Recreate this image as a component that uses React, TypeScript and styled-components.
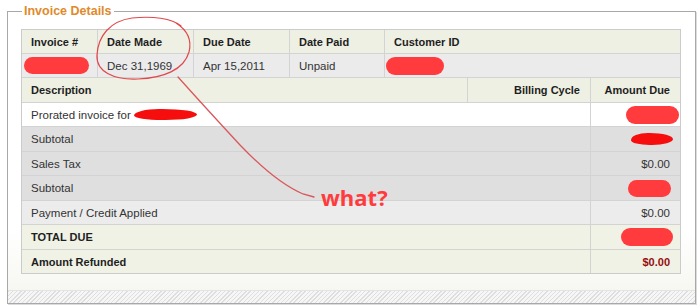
import React from "react";
import styled, { createGlobalStyle } from "styled-components";

const GlobalStyle = createGlobalStyle`
  html, body {
    margin: 0;
    padding: 0;
    background: #fff;
  }
  body {
    font-family: "Liberation Sans", Arial, sans-serif;
  }
`;

type Tone = "head" | "plain" | "white" | "gray" | "light" | "beige";

const toneColors: Record<Tone, string> = {
  head: "#eef0e3",
  plain: "#ebebeb",
  white: "#ffffff",
  gray: "#dfdfdf",
  light: "#ececec",
  beige: "#f0f2e6",
};

const Page = styled.div`
  position: relative;
  width: 700px;
  height: 308px;
  overflow: hidden;
`;

const Fieldset = styled.fieldset`
  margin: 4px 4px 0 7px;
  padding: 0;
  min-width: 0;
  border: 1px solid #a8a8a8;
  box-shadow: 1px 1px 0 #dcdcdc;
  background: linear-gradient(#ffffff 75%, #f5f5ef);
`;

const Legend = styled.legend`
  margin-left: 14px;
  padding: 0 2px;
  font-size: 12.5px;
  line-height: 15px;
  font-weight: 700;
  color: #df8a2c;
`;

const Content = styled.div`
  padding: 10px 14px 16px 13px;
`;

const Table = styled.div`
  border: 1px solid #cbcbcb;
`;

const Row = styled.div<{ $cols: string; $tone: Tone; $tall?: boolean; $last?: boolean }>`
  display: grid;
  grid-template-columns: ${(p) => p.$cols};
  height: ${(p) => (p.$tall ? 25 : 24)}px;
  box-sizing: border-box;
  border-bottom: ${(p) => (p.$last ? "none" : "1px solid #d3d3d3")};
  background: ${(p) => toneColors[p.$tone]};
  ${(p) => (p.$last ? "height: " + (p.$tall ? 24 : 23) + "px;" : "")}
`;

const Cell = styled.div<{ $bold?: boolean; $align?: "left" | "right"; $tight?: boolean; $red?: boolean }>`
  display: flex;
  align-items: center;
  justify-content: ${(p) => (p.$align === "right" ? "flex-end" : "flex-start")};
  box-sizing: border-box;
  padding: ${(p) => (p.$tight ? "0 1px" : "0 10px 0 9px")};
  border-right: 1px solid #d3d3d3;
  font-size: ${(p) => (p.$bold ? "11px" : "11.5px")};
  font-weight: ${(p) => (p.$bold ? 700 : 400)};
  color: ${(p) => (p.$red ? "#960d0d" : p.$bold ? "#1e1e1e" : "#333")};
  white-space: nowrap;
  overflow: hidden;

  &:last-child {
    border-right: none;
  }
`;

const Blob = styled.span<{ $w: number; $h: number; $brush?: boolean; $ml?: number; $mr?: number }>`
  display: inline-block;
  flex: none;
  width: ${(p) => p.$w}px;
  height: ${(p) => p.$h}px;
  margin-left: ${(p) => p.$ml ?? 0}px;
  margin-right: ${(p) => p.$mr ?? 0}px;
  border-radius: ${(p) => (p.$brush ? "40% 55% 50% 45% / 60% 50% 50% 40%" : `${p.$h / 2}px`)};
  background: ${(p) => (p.$brush ? "#f60d0d" : "#ff3b3e")};
`;

const Hatch = styled.div`
  height: 12px;
  border-top: 1px solid #e4e4e4;
  background: repeating-linear-gradient(135deg, #dedede 0 1px, #f6f6f6 1px 3px);
`;

const Scribble = styled.svg`
  position: absolute;
  left: 0;
  top: 0;
  pointer-events: none;
`;

const What = styled.span`
  position: absolute;
  left: 321px;
  top: 186px;
  font-family: "Open Sans", "Liberation Sans", sans-serif;
  font-size: 22px;
  line-height: 22px;
  font-weight: 700;
  color: #ff3b3e;
`;

const TOP_COLS = "76px 96px 96px 95px 1fr";
const DESC_COLS = "446px 123px 1fr";
const BODY_COLS = "569px 1fr";

const lines: {
  label: React.ReactNode;
  tone: Tone;
  tall?: boolean;
  bold?: boolean;
  amount: React.ReactNode;
  red?: boolean;
}[] = [
  {
    label: (
      <>
        Prorated invoice for&nbsp;
        <Blob $w={63} $h={11} $brush />
      </>
    ),
    tone: "white",
    amount: <Blob $w={53} $h={18} />,
  },
  { label: "Subtotal", tone: "gray", tall: true, amount: <Blob $w={42} $h={12} $brush $mr={6} /> },
  { label: "Sales Tax", tone: "gray", amount: "$0.00" },
  { label: "Subtotal", tone: "gray", tall: true, amount: <Blob $w={43} $h={17} $mr={8} /> },
  { label: "Payment / Credit Applied", tone: "light", amount: "$0.00" },
  { label: "TOTAL DUE", tone: "beige", tall: true, bold: true, amount: <Blob $w={52} $h={18} $mr={6} /> },
  { label: "Amount Refunded", tone: "beige", bold: true, amount: "$0.00", red: true },
];

export default function App() {
  return (
    <Page>
      <GlobalStyle />
      <Fieldset>
        <Legend>Invoice Details</Legend>
        <Content>
          <Table>
            <Row $cols={TOP_COLS} $tone="head">
              {["Invoice #", "Date Made", "Due Date", "Date Paid", "Customer ID"].map((h) => (
                <Cell key={h} $bold>
                  {h}
                </Cell>
              ))}
            </Row>
            <Row $cols={TOP_COLS} $tone="plain">
              <Cell $tight>
                <Blob $w={65} $h={17} $ml={1} />
              </Cell>
              <Cell>Dec 31,1969</Cell>
              <Cell>Apr 15,2011</Cell>
              <Cell>Unpaid</Cell>
              <Cell $tight>
                <Blob $w={58} $h={18} />
              </Cell>
            </Row>
            <Row $cols={DESC_COLS} $tone="head" $tall>
              <Cell $bold>Description</Cell>
              <Cell $bold $align="right">
                Billing Cycle
              </Cell>
              <Cell $bold $align="right">
                Amount Due
              </Cell>
            </Row>
            {lines.map((l, i) => (
              <Row key={i} $cols={BODY_COLS} $tone={l.tone} $tall={l.tall} $last={i === lines.length - 1}>
                <Cell $bold={l.bold}>{l.label}</Cell>
                {typeof l.amount === "string" ? (
                  <Cell $align="right" $bold={l.red} $red={l.red}>
                    {l.amount}
                  </Cell>
                ) : (
                  <Cell $align="right" $tight>
                    {l.amount}
                  </Cell>
                )}
              </Row>
            ))}
          </Table>
        </Content>
        <Hatch />
      </Fieldset>

      <Scribble width="700" height="308" viewBox="0 0 700 308" fill="none">
        <path
          d="M181 26 C172 18 152 16 132 18 C110 21 98 36 97 55 C96 72 114 80 138 79 C163 78 184 70 189 52 C192 40 187 30 176 23"
          stroke="#e2474b"
          strokeWidth="1.2"
          strokeLinecap="round"
        />
        <path
          d="M178 77 C195 96 216 119 240 145 C262 168 284 186 303 194 L314 197"
          stroke="#d9585c"
          strokeWidth="1.3"
          strokeLinecap="round"
        />
      </Scribble>
      <What>what?</What>
    </Page>
  );
}
